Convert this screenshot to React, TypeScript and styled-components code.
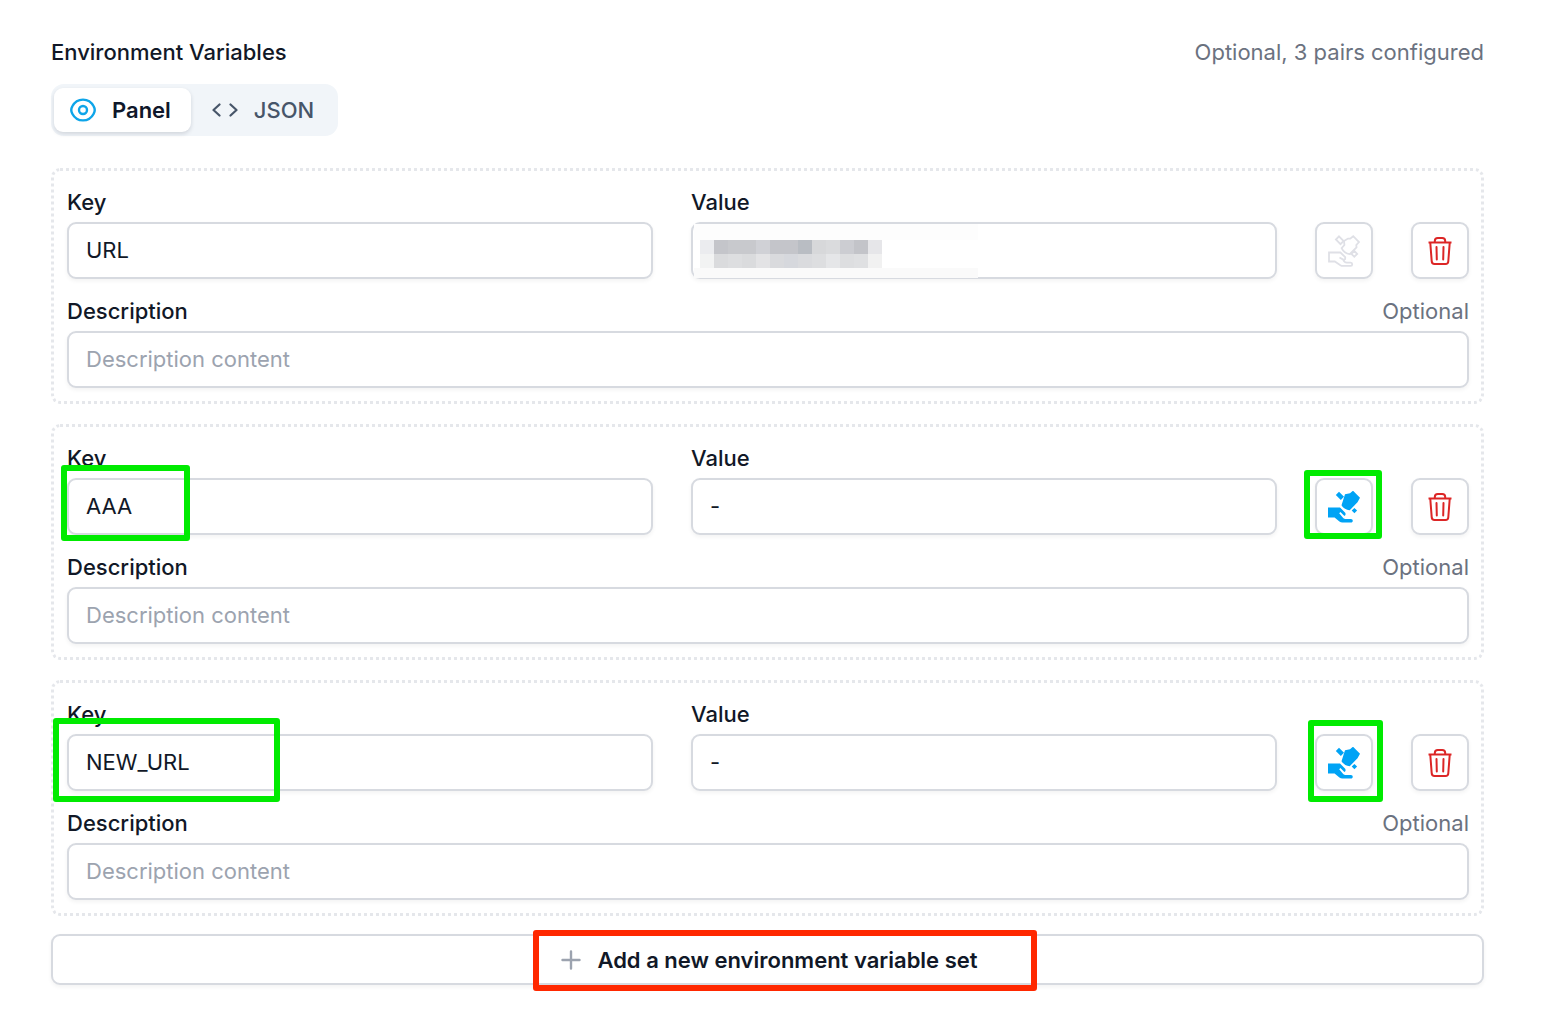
import React, { useState } from "react";
import styled, { createGlobalStyle, css } from "styled-components";

const GlobalStyle = createGlobalStyle`
  *, *::before, *::after { box-sizing: border-box; }
  body {
    margin: 0;
    background: #fff;
    color: #111827;
    font-family: Inter, "Liberation Sans", sans-serif;
    font-size: 22px;
    line-height: 32px;
  }
  button, input { font: inherit; color: inherit; }
`;

const Page = styled.main`
  padding: 36px 84px 32px 51px;
`;

const Header = styled.header`
  display: flex;
  align-items: center;
  justify-content: space-between;
`;

const Title = styled.h2`
  margin: 0;
  font-size: 22px;
  line-height: 32px;
  font-weight: 500;
`;

const Hint = styled.span`
  color: #6b7280;
`;

const Tabs = styled.div`
  display: inline-flex;
  gap: 5px;
  margin-top: 16px;
  padding: 4px 4px 4px 3px;
  border-radius: 13px;
  background: #f1f5f9;
  vertical-align: top;
`;

const Tab = styled.button<{ $active: boolean }>`
  display: flex;
  align-items: center;
  gap: 16px;
  height: 44px;
  padding: 0 20px 0 16px;
  border: 0;
  border-radius: 9px;
  background: transparent;
  color: #475569;
  font-weight: 500;
  cursor: pointer;
  ${(p) =>
    p.$active &&
    css`
      background: #fff;
      color: #0f172a;
      font-weight: 600;
      box-shadow: 0 2px 4px rgba(15, 23, 42, 0.14);
    `}
`;

const List = styled.div`
  display: flex;
  flex-direction: column;
  gap: 20px;
  margin-top: 32px;
`;

const Card = styled.section`
  display: flex;
  flex-direction: column;
  gap: 16px;
  padding: 15px 12px 13px 13px;
  border: 3px dotted #e5e7eb;
  border-radius: 9px;
`;

const PairRow = styled.div`
  display: grid;
  grid-template-columns: 1fr 1fr 58px 58px;
  column-gap: 38px;
  align-items: end;
`;

const Field = styled.div`
  display: flex;
  flex-direction: column;
  gap: 4px;
  min-width: 0;
`;

const LabelRow = styled.div`
  display: flex;
  justify-content: space-between;
`;

const Label = styled.label`
  font-weight: 500;
`;

const Anchor = styled.div`
  position: relative;
  display: flex;
`;

const control = css`
  height: 57px;
  border: 2px solid #d7dae0;
  border-radius: 9px;
  background: #fff;
  box-shadow: 0 2px 4px rgba(0, 0, 0, 0.05);
`;

const TextInput = styled.input`
  ${control}
  width: 100%;
  min-width: 0;
  padding: 0 17px 2px;
  outline: none;
  &::placeholder {
    color: #9ca3af;
    opacity: 1;
  }
`;

const IconButton = styled.button<{ $color: string }>`
  ${control}
  display: flex;
  align-items: center;
  justify-content: center;
  width: 100%;
  padding: 0;
  color: ${(p) => p.$color};
  cursor: pointer;
`;

const AddButton = styled.button`
  display: flex;
  align-items: center;
  justify-content: center;
  width: 100%;
  height: 51px;
  margin-top: 18px;
  padding: 0 0 0 4px;
  border: 2px solid #d7dae0;
  border-radius: 9px;
  background: #fff;
  font-weight: 600;
  box-shadow: 0 2px 4px rgba(0, 0, 0, 0.05);
  cursor: pointer;
`;

const AddContent = styled.span`
  position: relative;
  display: flex;
  align-items: center;
  gap: 16px;
`;

type Box = { left: number; top: number; width: number; height: number };

const Marker = styled.span<{ $box: Box; $color: string }>`
  position: absolute;
  z-index: 2;
  left: ${(p) => p.$box.left}px;
  top: ${(p) => p.$box.top}px;
  width: ${(p) => p.$box.width}px;
  height: ${(p) => p.$box.height}px;
  border: 6px solid ${(p) => p.$color};
  border-radius: 3px;
  pointer-events: none;
`;

const Mask = styled.span`
  position: absolute;
  left: 3px;
  top: 2px;
  width: 284px;
  height: 54px;
  padding: 16px 0 0 6px;
  background: linear-gradient(#fdfdfd 0 16px, #fff 16px 44px, #fafafa 44px);
  pointer-events: none;
`;

const Mosaic = styled.span`
  display: grid;
  grid-template-columns: repeat(13, 14px);
  grid-auto-rows: 14px;
`;

const Tile = styled.span<{ $tone: string }>`
  background: ${(p) => p.$tone};
`;

const tiles = [
  "#ebecef", "#c4c5ca", "#c8c9cd", "#c8c9cd", "#d0d1d6", "#c4c5ca", "#c4c5ca", "#b9bdc3", "#d7d8da", "#dadbdd", "#cccdd2", "#c3c4c9", "#e6e6e9",
  "#f2f3f3", "#dadbdd", "#dddee0", "#dadbdd", "#e3e3e5", "#d9dadd", "#d6d8dd", "#dadbde", "#dddee0", "#e5e6e8", "#dddee0", "#dfe0e2", "#f1f1f1",
];

const EyeIcon = () => (
  <svg width="26" height="26" viewBox="0 0 26 26" fill="none" stroke="#0ea5e9" strokeWidth="2.4" aria-hidden="true">
    <path d="M13 2.600C18.600 2.600 21.800 5.700 23.700 9.300C25.100 11.800 25.100 14.200 23.700 16.700C21.800 20.300 18.600 23.400 13 23.400C7.400 23.400 4.200 20.300 2.300 16.700C.9 14.200.9 11.800 2.300 9.300C4.200 5.700 7.400 2.600 13 2.600Z" />
    <circle cx="13" cy="13" r="4" />
  </svg>
);

const CodeIcon = () => (
  <svg width="26" height="26" viewBox="0 0 26 26" fill="none" stroke="currentColor" strokeWidth="2.2" strokeLinecap="round" strokeLinejoin="round" aria-hidden="true">
    <path d="M7.500 7.500 1.500 13l6 5.500M18.500 7.500l6 5.500-6 5.500" />
  </svg>
);

const PlusIcon = () => (
  <svg width="20" height="20" viewBox="0 0 20 20" fill="none" stroke="#9ca3af" strokeWidth="2.4" strokeLinecap="round" aria-hidden="true">
    <path d="M10 1.500v17M1.500 10h17" />
  </svg>
);

const TrashIcon = () => (
  <svg width="32" height="32" viewBox="0 0 32 32" fill="none" stroke="currentColor" strokeWidth="2" strokeLinecap="round" strokeLinejoin="round" aria-hidden="true">
    <path d="M4.500 7.500h23" strokeLinecap="butt" />
    <path d="M10.800 7V6C10.800 4.100 12 3 13.800 3h4.400C20 3 21.200 4.100 21.200 6V7" />
    <path d="M6.300 8l1.400 18.200C7.800 27.900 8.800 29 10.500 29h11c1.700 0 2.700-1.100 2.800-2.800L25.700 8" />
    <path d="M12.500 12l.3 12.500M19.500 12l-.3 12.500" />
  </svg>
);

const HandoffIcon = ({ filled }: { filled: boolean }) => (
  <svg width="32" height="32" viewBox="0 0 32 32" fill={filled ? "currentColor" : "none"} stroke={filled ? "none" : "currentColor"} strokeWidth="1.8" aria-hidden="true">
    {filled ? (
      <>
        <path d="M11 .7l5 5.100-3.200 3.300L7.800 4z" />
        <path d="M17 3.200 22 2.200 25 -.3 32 6.700 29.500 11.200 21.700 19.300C18.100 18.900 15.200 17 13.500 14.200Z" />
        <path d="M26.400 17l2.700 2.600-2.700 2.700-2.700-2.700z" />
        <path d="M0 16.400h12l5.200 5.300c.8 1.200.4 2.800-.8 3.200l-4-3.900-1.200 1.200 4 4.700c.8.8 1.700 1 2.700 1h5c2.500 0 2.500 3.600 0 3.600h-8.500c-1.200 0-2-.3-3-.9L6.600 26.500H0z" />
      </>
    ) : (
      <>
        <path d="M11 1.300l4.600 4.700-3.100 3.200-4.600-4.700z" />
        <path d="M16 6 20 3.600H22.200L25.200 1.200 31 7 28.300 10 28.500 12.300 21.700 19.200C18.100 18.700 15.200 16.600 13.600 13.200L16.400 10Z" />
        <path d="M26.300 16l2.900 2.900-2.900 2.900-2.900-2.900z" />
        <path d="M11.500 22.500l3.700 2.100c1 .4 2-.1 2-1.200v-1.300l-4.800-4.600H1v9h5.800l5.600 3.700c.8.5 1.600.7 2.600.7h7.800c1.900 0 1.900-3.200 0-3.200h-4c-1.800 0-2.900-1-3.600-3.200" />
      </>
    )}
  </svg>
);

type Pair = {
  key: string;
  value: string;
  masked?: boolean;
  pending?: boolean;
  keyBox?: Box;
  actionBox?: Box;
};

const GREEN = "#00eb00";
const RED = "#ff2800";

const initialPairs: Pair[] = [
  { key: "URL", value: "", masked: true },
  {
    key: "AAA",
    value: "-",
    pending: true,
    keyBox: { left: -6, top: -13, width: 129, height: 76 },
    actionBox: { left: -11, top: -8, width: 78, height: 69 },
  },
  {
    key: "NEW_URL",
    value: "-",
    pending: true,
    keyBox: { left: -14, top: -16, width: 227, height: 84 },
    actionBox: { left: -7, top: -14, width: 75, height: 82 },
  },
];

function PairCard({ pair, index }: { pair: Pair; index: number }) {
  const keyId = `key-${index}`;
  const valueId = `value-${index}`;
  const descriptionId = `description-${index}`;
  return (
    <Card>
      <PairRow>
        <Field>
          <Label htmlFor={keyId}>Key</Label>
          <Anchor>
            <TextInput id={keyId} defaultValue={pair.key} />
            {pair.keyBox && <Marker $box={pair.keyBox} $color={GREEN} />}
          </Anchor>
        </Field>
        <Field>
          <Label htmlFor={valueId}>Value</Label>
          <Anchor>
            <TextInput id={valueId} defaultValue={pair.value} />
            {pair.masked && (
              <Mask>
                <Mosaic>
                  {tiles.map((tone, i) => (
                    <Tile key={i} $tone={tone} />
                  ))}
                </Mosaic>
              </Mask>
            )}
          </Anchor>
        </Field>
        <Anchor>
          <IconButton type="button" aria-label="Hand over value" disabled={!pair.pending} $color={pair.pending ? "#00a3f5" : "#dfe0e6"}>
            <HandoffIcon filled={!!pair.pending} />
          </IconButton>
          {pair.actionBox && <Marker $box={pair.actionBox} $color={GREEN} />}
        </Anchor>
        <IconButton type="button" aria-label="Delete pair" $color="#dc2626">
          <TrashIcon />
        </IconButton>
      </PairRow>
      <Field>
        <LabelRow>
          <Label htmlFor={descriptionId}>Description</Label>
          <Hint>Optional</Hint>
        </LabelRow>
        <TextInput id={descriptionId} placeholder="Description content" />
      </Field>
    </Card>
  );
}

export default function App() {
  const [pairs, setPairs] = useState<Pair[]>(initialPairs);
  const [view, setView] = useState<"panel" | "json">("panel");
  return (
    <>
      <GlobalStyle />
      <Page>
        <Header>
          <Title>Environment Variables</Title>
          <Hint>Optional, {pairs.length} pairs configured</Hint>
        </Header>
        <Tabs role="tablist">
          <Tab type="button" role="tab" aria-selected={view === "panel"} $active={view === "panel"} onClick={() => setView("panel")}>
            <EyeIcon />
            Panel
          </Tab>
          <Tab type="button" role="tab" aria-selected={view === "json"} $active={view === "json"} onClick={() => setView("json")}>
            <CodeIcon />
            JSON
          </Tab>
        </Tabs>
        <List>
          {pairs.map((pair, i) => (
            <PairCard key={i} pair={pair} index={i} />
          ))}
        </List>
        <AddButton type="button" onClick={() => setPairs([...pairs, { key: "", value: "" }])}>
          <AddContent>
            <PlusIcon />
            Add a new environment variable set
            <Marker $box={{ left: -28, top: -14, width: 504, height: 61 }} $color={RED} />
          </AddContent>
        </AddButton>
      </Page>
    </>
  );
}
